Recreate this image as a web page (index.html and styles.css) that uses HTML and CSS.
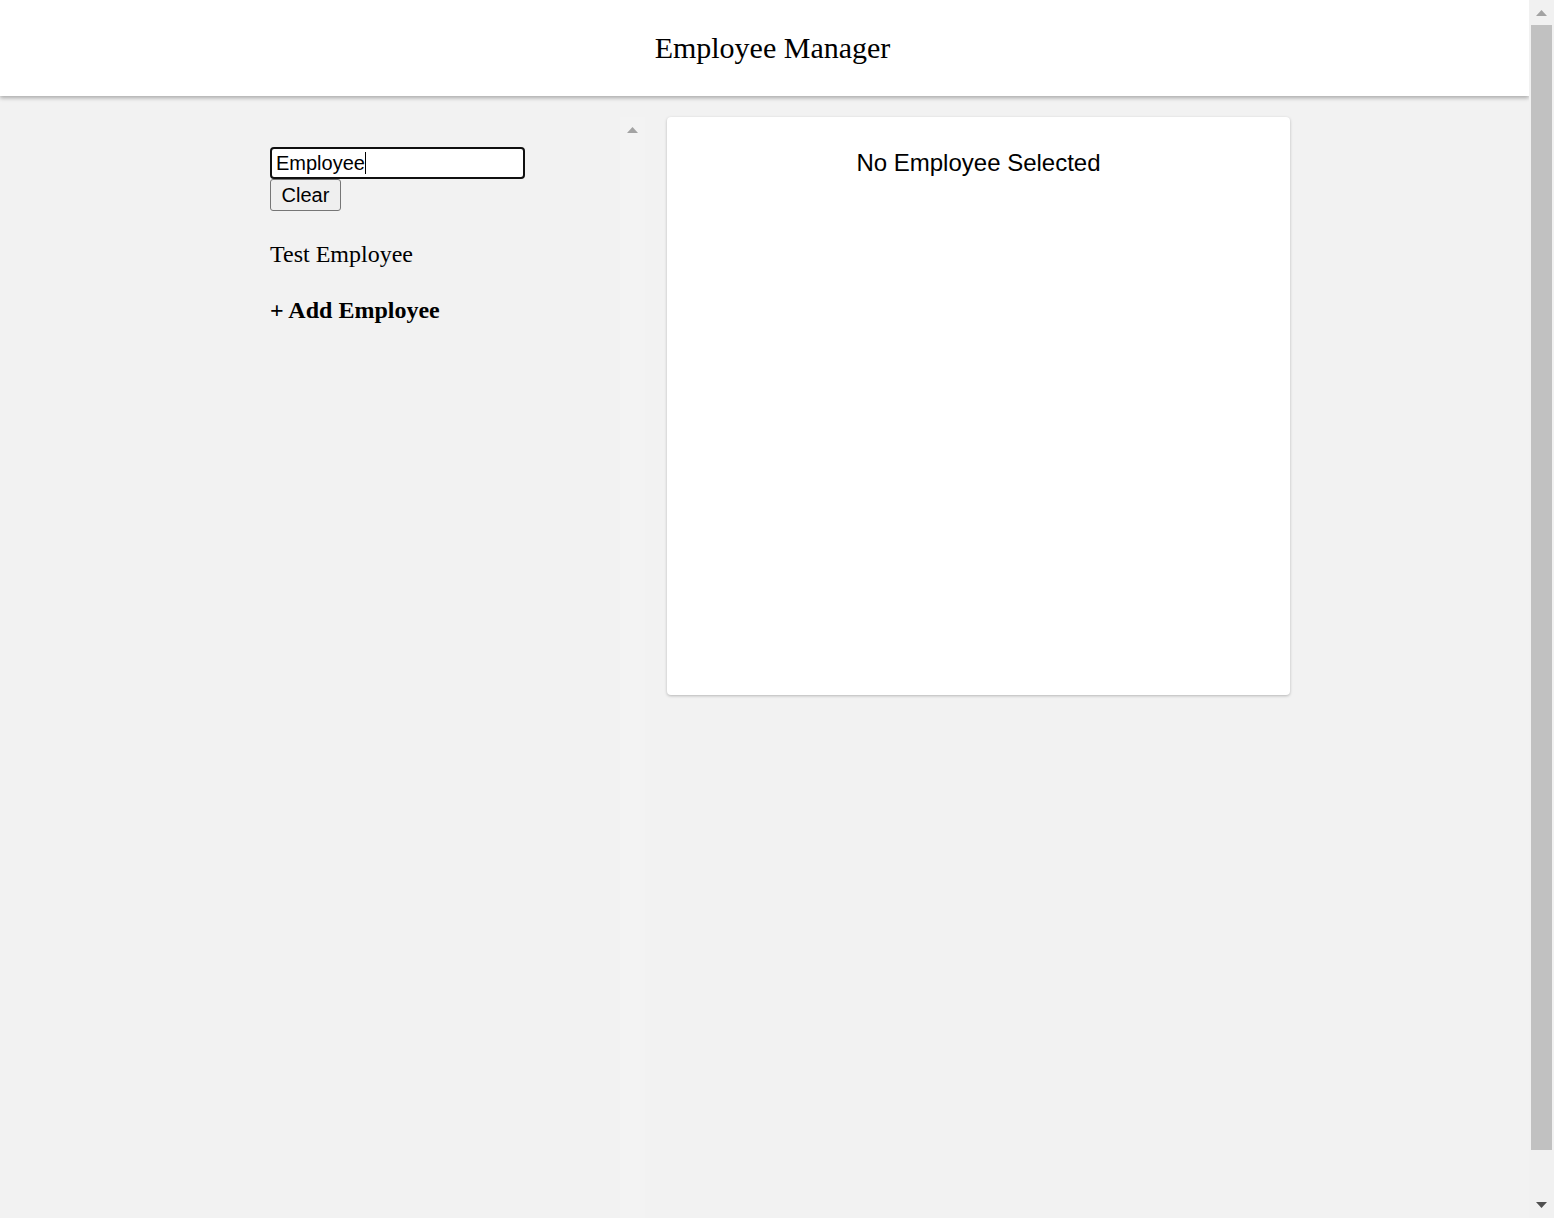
FILE: index.html
```html
<!DOCTYPE html>
<html lang="en">
<head>
<meta charset="utf-8">
<title>Employee Manager</title>
<link rel="stylesheet" href="styles.css">
</head>
<body>
  <div class="page">
    <header class="app-header">
      <h1 class="app-title">Employee Manager</h1>
    </header>
    <main class="app-main">
      <div class="layout">
        <aside class="sidebar">
          <div class="sidebar-content">
            <div class="search-field">
              <input class="search-input" type="text" value="Employee">
              <span class="caret"></span>
            </div>
            <button class="clear-btn" type="button">Clear</button>
            <div class="employee-item">Test Employee</div>
            <div class="add-employee">+ Add Employee</div>
          </div>
          <div class="scrollbar scrollbar-inner">
            <div class="scroll-btn">
              <svg class="arrow" width="11" height="6" viewBox="0 0 11 6"><polygon points="0,6 5.5,0 11,6" fill="#a3a3a3"/></svg>
            </div>
          </div>
        </aside>
        <section class="detail-panel">
          <h2 class="detail-empty">No Employee Selected</h2>
        </section>
      </div>
    </main>
  </div>
  <div class="scrollbar scrollbar-window">
    <div class="scroll-btn">
      <svg class="arrow" width="11" height="6" viewBox="0 0 11 6"><polygon points="0,6 5.5,0 11,6" fill="#a3a3a3"/></svg>
    </div>
    <div class="scroll-track">
      <div class="scroll-thumb"></div>
    </div>
    <div class="scroll-btn scroll-btn-down">
      <svg class="arrow" width="11" height="6" viewBox="0 0 11 6"><polygon points="0,0 11,0 5.5,6" fill="#505050"/></svg>
    </div>
  </div>
</body>
</html>
```
FILE: styles.css
```css
html, body {
  margin: 0;
  padding: 0;
  height: 100%;
  overflow: hidden;
}

body {
  display: flex;
  background: #f2f2f2;
  font-family: "Liberation Serif", "Times New Roman", serif;
  color: #000;
}

.page {
  flex: 1;
  min-width: 0;
  height: 100%;
  overflow: hidden;
}

/* drawn scrollbars */
.scrollbar {
  width: 25px;
  flex: none;
  display: flex;
  flex-direction: column;
  background: #f1f1f1;
}

.scrollbar-window {
  height: 100%;
}

.scroll-btn {
  height: 25px;
  flex: none;
  display: flex;
  justify-content: center;
  padding-top: 10px;
  box-sizing: border-box;
}

.scroll-btn-down {
  padding-top: 9px;
}

.arrow {
  display: block;
}

.scroll-track {
  flex: 1;
  padding: 0 2px;
}

.scroll-thumb {
  height: 1125px;
  background: #c1c1c1;
}

.app-header {
  position: relative;
  z-index: 1;
  height: 96px;
  box-sizing: border-box;
  padding: 31px 0 0 16px;
  background: #fff;
  box-shadow: 0 2px 4px rgba(0, 0, 0, 0.3);
}

.app-title {
  margin: 0;
  text-align: center;
  font-size: 30px;
  font-weight: normal;
  line-height: 34px;
}

.app-main {
  display: flex;
  justify-content: center;
  padding: 21px 0 0 31px;
}

.layout {
  display: flex;
  align-items: flex-start;
  width: 1020px;
  gap: 22px;
}

.sidebar {
  width: 375px;
  height: 1147px;
  display: flex;
  flex: none;
}

.sidebar-content {
  flex: 1;
  padding-top: 30px;
}

.scrollbar-inner {
  height: 100%;
  background: #f3f3f3;
}

.search-field {
  position: relative;
  width: 255px;
}

.search-input {
  display: block;
  width: 255px;
  height: 32px;
  box-sizing: border-box;
  margin: 0;
  padding: 0 4px;
  border: 2px solid #101010;
  border-radius: 4px;
  background: #fff;
  font-family: "Liberation Sans", Arial, sans-serif;
  font-size: 20px;
  color: #000;
  outline: none;
}

.caret {
  position: absolute;
  left: 95px;
  top: 5px;
  width: 1px;
  height: 22px;
  background: #000;
}

.clear-btn {
  display: block;
  width: 71px;
  height: 32px;
  box-sizing: border-box;
  margin: 0;
  padding: 0;
  border: 1px solid #767676;
  border-radius: 3px;
  background: #efefef;
  font-family: "Liberation Sans", Arial, sans-serif;
  font-size: 20px;
  color: #000;
  text-align: center;
}

.employee-item {
  margin-top: 30px;
  font-size: 24px;
}

.add-employee {
  margin-top: 29px;
  font-size: 24px;
  font-weight: bold;
}

.detail-panel {
  width: 623px;
  height: 578px;
  box-sizing: border-box;
  padding-top: 32px;
  background: #fff;
  border-radius: 4px;
  box-shadow: 0 1px 3px rgba(0, 0, 0, 0.25);
  flex: none;
}

.detail-empty {
  margin: 0;
  text-align: center;
  font-family: "Liberation Sans", Arial, sans-serif;
  font-size: 24px;
  font-weight: normal;
}
```
